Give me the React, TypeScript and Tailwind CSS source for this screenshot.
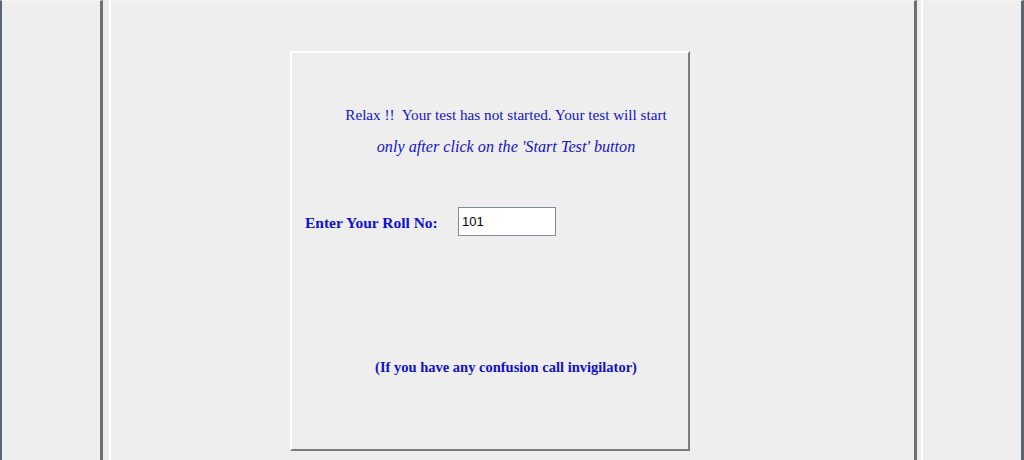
export default function App() {
  return (
    <div className="flex h-[460px] w-[1024px] overflow-hidden bg-[#ececec]">
      {/* left frame */}
      <div className="h-full w-[103px] shrink-0 border-l-[2px] border-r-[3px] border-t border-l-[#56657c] border-r-[#6e6e6e] border-t-[#f6f3ea] bg-[#eeeeee]" />

      {/* frame gap */}
      <div className="h-full w-[6px] shrink-0 bg-[#ececec]" />

      {/* main frame */}
      <div className="h-full w-[808px] shrink-0 border-l-2 border-r-[3px] border-t border-l-white border-r-[#6e6e6e] border-t-[#f6f3ea] bg-[#eeeeee]">
        <div className="ml-[179px] mt-[50px] flex h-[400px] w-[400px] flex-col border-2 border-b-[#7c7c7c] border-l-white border-r-[#7c7c7c] border-t-white font-['Liberation_Serif',serif]">
          <div className="mt-[52px] pl-[32px] text-center text-[15.2px] leading-[20px] text-[#1414c4]">
            Relax !!&nbsp; Your test has not started. Your test will start
          </div>
          <div className="mt-[12px] pl-[32px] text-center text-[16.2px] italic leading-[20px] text-[#1414c4]">
            only after click on the 'Start Test' button
          </div>

          <div className="mt-[50px] flex items-center pl-[13px]">
            <span className="w-[153px] pt-[3px] text-[15.5px] font-bold text-[#1010d4]">Enter Your Roll No:</span>
            <input
              defaultValue="101"
              className="h-[29px] w-[98px] border border-[#7f8b97] bg-white px-[3px] font-['Liberation_Sans',sans-serif] text-[13px] text-black outline-none"
            />
          </div>

          <div className="mt-[121px] pl-[32px] text-center text-[14.5px] font-bold leading-[20px] text-[#1010c8]">
            (If you have any confusion call invigilator)
          </div>
        </div>
      </div>

      {/* frame gap */}
      <div className="h-full w-[4px] shrink-0 bg-[#ececec]" />

      {/* right frame */}
      <div className="h-full w-[103px] shrink-0 border-l-2 border-r-[3px] border-t border-l-white border-r-[#5e6670] border-t-[#f6f3ea] bg-[#eeeeee]" />
    </div>
  );
}
